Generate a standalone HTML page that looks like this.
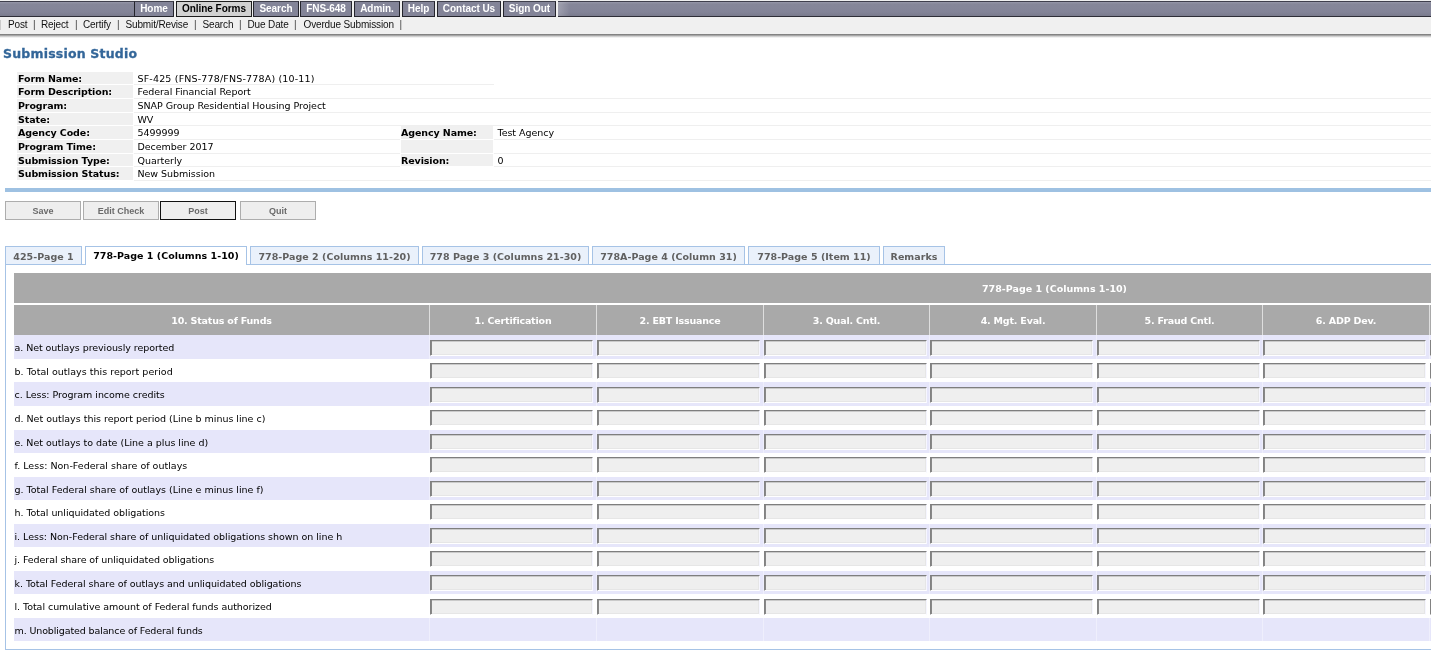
<!DOCTYPE html>
<html lang="en">
<head>
<meta charset="utf-8">
<title>Submission Studio</title>
<style>
html,body{margin:0;padding:0;background:#fff;}
body{width:1431px;height:653px;overflow:hidden;position:relative;font-family:"DejaVu Sans","Liberation Sans",sans-serif;font-size:9.5px;color:#000;letter-spacing:-0.04px;}
*{box-sizing:border-box;}
#wrap{position:absolute;left:0;top:0;width:1431px;height:653px;will-change:transform;}
#topbar{position:absolute;left:0;top:0;width:1431px;height:17px;background:#f0f0f0;}
.nf{position:absolute;top:1px;height:16px;background:linear-gradient(#9798a9 0,#868799 2px,#838498 10px,#7a7b8d 14px);border-top:1px solid #3f3f4c;border-bottom:1px solid #2e2e38;}
.nt{position:absolute;top:1px;height:16px;background:#838498;border:1px solid #24242c;border-top-color:#3f3f4c;color:#fff;font-family:"Liberation Sans",sans-serif;font-weight:bold;font-size:10px;letter-spacing:-0.05px;line-height:14px;text-align:center;white-space:nowrap;}
.nt.act{background:#d2d2d2;color:#000;border-color:#1e1e1e;}
#subbar{position:absolute;left:0;top:17px;width:1431px;height:17px;background:#f0f0f0;font-family:"Liberation Sans",sans-serif;font-size:10px;letter-spacing:-0.14px;line-height:16px;white-space:nowrap;color:#111;}
#subbar span{position:absolute;top:0;}
#subshadow{position:absolute;left:0;top:34px;width:1431px;height:4px;background:linear-gradient(#707070,#a8a8a8 38%,#dedede 70%,#fff);}
h1{position:absolute;left:3px;top:46px;margin:0;font-size:12.5px;line-height:16px;font-weight:bold;color:#336699;white-space:nowrap;letter-spacing:0.2px;-webkit-text-stroke:0.3px #336699;}
.lab{position:absolute;height:13px;background:#f0f0f0;font-weight:bold;font-size:9.5px;letter-spacing:-0.1px;line-height:13px;padding-left:1px;white-space:nowrap;}
.val{position:absolute;height:13px;border-bottom:1px solid #efefef;font-size:9.5px;line-height:13px;padding-left:3.5px;white-space:nowrap;}
#bluebar{position:absolute;left:5px;top:188px;width:1426px;height:4px;background:#9ec1e2;}
.btn{position:absolute;display:block;margin:0;padding:0;border-radius:0;-webkit-appearance:none;appearance:none;top:201px;height:19px;width:76px;background:#eee;border:1px solid #adadad;color:#6a6a6a;font-family:"Liberation Sans",sans-serif;font-weight:bold;font-size:9px;letter-spacing:0;line-height:18px;text-align:center;}
.btn.def{border:1px solid #111;}
.tab{position:absolute;top:246px;height:19px;background:#eaf1fb;border:1px solid #a6c3e6;color:#606060;font-weight:bold;font-size:9.5px;letter-spacing:0.025px;line-height:20px;text-align:center;white-space:nowrap;}
.tab.act{top:246px;height:19px;background:#fff;color:#000;border-bottom:none;line-height:18px;z-index:2;}
#panel{position:absolute;left:5px;top:264px;width:1440px;height:386px;border:1px solid #a6c3e6;border-right:none;background:#fff;}
#grid{position:absolute;left:14px;top:273px;width:1430px;height:370px;}
.gh{position:absolute;background:#a9a9a9;color:#fff;font-weight:bold;font-size:9.5px;letter-spacing:-0.19px;text-align:center;white-space:nowrap;}
.row{position:absolute;left:0;width:1430px;}
.row.alt{background:#e6e6fa;}
.row .t{position:absolute;left:0.5px;top:1px;font-size:9.5px;white-space:nowrap;}
.row .sep{position:absolute;top:0;width:1px;height:100%;background:#efeffc;}
.in{position:absolute;display:block;margin:0;padding:0;outline:none;border-radius:0;-webkit-appearance:none;appearance:none;font:inherit;height:16px;width:163px;background:#efefef;border:1px solid;border-color:#7e7e7e #f6f6ff #fff #828282;box-shadow:inset 1px 0 0 #888,inset 0 1px 0 #cacaca,inset -1px -1px 0 #e6e6e6;}
</style>
</head>
<body>
<div id="wrap">
<div id="topbar">
<div class="nf" style="left:0;width:134px"></div>
<div class="nt" style="left:134px;width:40px">Home</div>
<div class="nt act" style="left:176px;width:76px">Online Forms</div>
<div class="nt" style="left:253px;width:46px">Search</div>
<div class="nt" style="left:300px;width:52px">FNS-648</div>
<div class="nt" style="left:354px;width:46px">Admin.</div>
<div class="nt" style="left:402px;width:33px">Help</div>
<div class="nt" style="left:437px;width:64px">Contact Us</div>
<div class="nt" style="left:503px;width:53px">Sign Out</div>
<div class="nf" style="left:558px;width:873px;background:linear-gradient(90deg,rgba(255,255,255,.22),rgba(255,255,255,0) 12px),linear-gradient(#9798a9 0,#868799 2px,#838498 10px,#7a7b8d 14px)"></div>
</div>
<div id="subbar">
<span style="left:-1.5px;color:#444">|</span>
<span style="left:8px">Post</span>
<span style="left:33px;color:#444">|</span>
<span style="left:41px">Reject</span>
<span style="left:75px;color:#444">|</span>
<span style="left:83px">Certify</span>
<span style="left:117px;color:#444">|</span>
<span style="left:125.5px">Submit/Revise</span>
<span style="left:194px;color:#444">|</span>
<span style="left:202.5px">Search</span>
<span style="left:239px;color:#444">|</span>
<span style="left:247.5px">Due Date</span>
<span style="left:294px;color:#444">|</span>
<span style="left:303.5px">Overdue Submission</span>
<span style="left:399.5px;color:#444">|</span>
</div>
<div id="subshadow"></div>
<h1>Submission Studio</h1>
<div class="lab" style="left:17px;top:72px;width:116px;height:12px">Form Name:</div>
<div class="val" style="left:134px;top:72px;width:360px;height:13px;letter-spacing:0.17px">SF-425 (FNS-778/FNS-778A) (10-11)</div>
<div class="lab" style="left:17px;top:85px;width:116px;height:13px">Form Description:</div>
<div class="val" style="left:134px;top:85px;width:1297px;height:14px">Federal Financial Report</div>
<div class="lab" style="left:17px;top:99px;width:116px;height:13px">Program:</div>
<div class="val" style="left:134px;top:99px;width:1297px;height:14px">SNAP Group Residential Housing Project</div>
<div class="lab" style="left:17px;top:113px;width:116px;height:12px">State:</div>
<div class="val" style="left:134px;top:113px;width:1297px;height:13px">WV</div>
<div class="lab" style="left:17px;top:126px;width:116px;height:13px">Agency Code:</div>
<div class="val" style="left:134px;top:126px;width:266px;height:14px">5499999</div>
<div class="lab" style="left:401px;top:126px;width:92px;padding-left:0;height:13px">Agency Name:</div>
<div class="val" style="left:494px;top:126px;width:937px;height:14px">Test Agency</div>
<div class="lab" style="left:17px;top:140px;width:116px;height:13px">Program Time:</div>
<div class="val" style="left:134px;top:140px;width:266px;height:14px">December 2017</div>
<div class="lab" style="left:401px;top:140px;width:92px;padding-left:0;height:13px"></div>
<div class="val" style="left:494px;top:140px;width:937px;height:14px"></div>
<div class="lab" style="left:17px;top:154px;width:116px;height:12px">Submission Type:</div>
<div class="val" style="left:134px;top:154px;width:266px;height:13px">Quarterly</div>
<div class="lab" style="left:401px;top:154px;width:92px;padding-left:0;height:12px">Revision:</div>
<div class="val" style="left:494px;top:154px;width:937px;height:13px">0</div>
<div class="lab" style="left:17px;top:167px;width:116px;height:13px">Submission Status:</div>
<div class="val" style="left:134px;top:167px;width:1297px;height:14px">New Submission</div>
<div id="bluebar"></div>
<button type="button" class="btn" style="left:5px">Save</button>
<button type="button" class="btn" style="left:83px">Edit Check</button>
<button type="button" class="btn def" style="left:160px">Post</button>
<button type="button" class="btn" style="left:240px">Quit</button>
<div id="panel"></div>
<div class="tab" style="left:5px;width:77px">425-Page 1</div>
<div class="tab act" style="left:85px;width:162px">778-Page 1 (Columns 1-10)</div>
<div class="tab" style="left:250px;width:169px">778-Page 2 (Columns 11-20)</div>
<div class="tab" style="left:422px;width:167px">778 Page 3 (Columns 21-30)</div>
<div class="tab" style="left:592px;width:153px">778A-Page 4 (Column 31)</div>
<div class="tab" style="left:748px;width:132px">778-Page 5 (Item 11)</div>
<div class="tab" style="left:883px;width:62px">Remarks</div>
<div id="grid">
<div class="gh" style="left:0;top:0;width:1430px;height:30px;line-height:30px;text-align:left"><span style="position:absolute;left:968px;top:1px;letter-spacing:0px">778-Page 1 (Columns 1-10)</span></div>
<div style="position:absolute;left:0;top:32px;width:1430px;height:30px;background:#dedede"></div>
<div class="gh" style="left:0px;top:32px;width:415px;height:30px;line-height:32px">10. Status of Funds</div>
<div class="gh" style="left:416px;top:32px;width:166px;height:30px;line-height:32px">1. Certification</div>
<div class="gh" style="left:583px;top:32px;width:166px;height:30px;line-height:32px">2. EBT Issuance</div>
<div class="gh" style="left:750px;top:32px;width:165px;height:30px;line-height:32px">3. Qual. Cntl.</div>
<div class="gh" style="left:916px;top:32px;width:166px;height:30px;line-height:32px">4. Mgt. Eval.</div>
<div class="gh" style="left:1083px;top:32px;width:165px;height:30px;line-height:32px">5. Fraud Cntl.</div>
<div class="gh" style="left:1249px;top:32px;width:166px;height:30px;line-height:32px">6. ADP Dev.</div>
<div class="gh" style="left:1416px;top:32px;width:20px;height:30px;line-height:32px"></div>
<div class="row alt" style="top:62px;height:24px">
<div class="t" style="line-height:24px;letter-spacing:-0.067px">a. Net outlays previously reported</div>
<div class="sep" style="left:415px"></div>
<input class="in" type="text" readonly tabindex="-1" style="left:416px;top:5px">
<div class="sep" style="left:582px"></div>
<input class="in" type="text" readonly tabindex="-1" style="left:583px;top:5px">
<div class="sep" style="left:749px"></div>
<input class="in" type="text" readonly tabindex="-1" style="left:750px;top:5px">
<div class="sep" style="left:915px"></div>
<input class="in" type="text" readonly tabindex="-1" style="left:916px;top:5px">
<div class="sep" style="left:1082px"></div>
<input class="in" type="text" readonly tabindex="-1" style="left:1083px;top:5px">
<div class="sep" style="left:1248px"></div>
<input class="in" type="text" readonly tabindex="-1" style="left:1249px;top:5px">
<div class="sep" style="left:1415px"></div>
<input class="in" type="text" readonly tabindex="-1" style="left:1416px;top:5px">
</div>
<div class="row" style="top:86px;height:23px">
<div class="t" style="line-height:23px;letter-spacing:0.019px">b. Total outlays this report period</div>
<input class="in" type="text" readonly tabindex="-1" style="left:416px;top:4px">
<input class="in" type="text" readonly tabindex="-1" style="left:583px;top:4px">
<input class="in" type="text" readonly tabindex="-1" style="left:750px;top:4px">
<input class="in" type="text" readonly tabindex="-1" style="left:916px;top:4px">
<input class="in" type="text" readonly tabindex="-1" style="left:1083px;top:4px">
<input class="in" type="text" readonly tabindex="-1" style="left:1249px;top:4px">
<input class="in" type="text" readonly tabindex="-1" style="left:1416px;top:4px">
</div>
<div class="row alt" style="top:109px;height:24px">
<div class="t" style="line-height:24px;letter-spacing:-0.039px">c. Less: Program income credits</div>
<div class="sep" style="left:415px"></div>
<input class="in" type="text" readonly tabindex="-1" style="left:416px;top:5px">
<div class="sep" style="left:582px"></div>
<input class="in" type="text" readonly tabindex="-1" style="left:583px;top:5px">
<div class="sep" style="left:749px"></div>
<input class="in" type="text" readonly tabindex="-1" style="left:750px;top:5px">
<div class="sep" style="left:915px"></div>
<input class="in" type="text" readonly tabindex="-1" style="left:916px;top:5px">
<div class="sep" style="left:1082px"></div>
<input class="in" type="text" readonly tabindex="-1" style="left:1083px;top:5px">
<div class="sep" style="left:1248px"></div>
<input class="in" type="text" readonly tabindex="-1" style="left:1249px;top:5px">
<div class="sep" style="left:1415px"></div>
<input class="in" type="text" readonly tabindex="-1" style="left:1416px;top:5px">
</div>
<div class="row" style="top:133px;height:24px">
<div class="t" style="line-height:24px;letter-spacing:-0.014px">d. Net outlays this report period (Line b minus line c)</div>
<input class="in" type="text" readonly tabindex="-1" style="left:416px;top:4px">
<input class="in" type="text" readonly tabindex="-1" style="left:583px;top:4px">
<input class="in" type="text" readonly tabindex="-1" style="left:750px;top:4px">
<input class="in" type="text" readonly tabindex="-1" style="left:916px;top:4px">
<input class="in" type="text" readonly tabindex="-1" style="left:1083px;top:4px">
<input class="in" type="text" readonly tabindex="-1" style="left:1249px;top:4px">
<input class="in" type="text" readonly tabindex="-1" style="left:1416px;top:4px">
</div>
<div class="row alt" style="top:157px;height:23px">
<div class="t" style="line-height:23px;letter-spacing:-0.010px">e. Net outlays to date (Line a plus line d)</div>
<div class="sep" style="left:415px"></div>
<input class="in" type="text" readonly tabindex="-1" style="left:416px;top:4px">
<div class="sep" style="left:582px"></div>
<input class="in" type="text" readonly tabindex="-1" style="left:583px;top:4px">
<div class="sep" style="left:749px"></div>
<input class="in" type="text" readonly tabindex="-1" style="left:750px;top:4px">
<div class="sep" style="left:915px"></div>
<input class="in" type="text" readonly tabindex="-1" style="left:916px;top:4px">
<div class="sep" style="left:1082px"></div>
<input class="in" type="text" readonly tabindex="-1" style="left:1083px;top:4px">
<div class="sep" style="left:1248px"></div>
<input class="in" type="text" readonly tabindex="-1" style="left:1249px;top:4px">
<div class="sep" style="left:1415px"></div>
<input class="in" type="text" readonly tabindex="-1" style="left:1416px;top:4px">
</div>
<div class="row" style="top:180px;height:24px">
<div class="t" style="line-height:24px;letter-spacing:0.013px">f. Less: Non-Federal share of outlays</div>
<input class="in" type="text" readonly tabindex="-1" style="left:416px;top:4px">
<input class="in" type="text" readonly tabindex="-1" style="left:583px;top:4px">
<input class="in" type="text" readonly tabindex="-1" style="left:750px;top:4px">
<input class="in" type="text" readonly tabindex="-1" style="left:916px;top:4px">
<input class="in" type="text" readonly tabindex="-1" style="left:1083px;top:4px">
<input class="in" type="text" readonly tabindex="-1" style="left:1249px;top:4px">
<input class="in" type="text" readonly tabindex="-1" style="left:1416px;top:4px">
</div>
<div class="row alt" style="top:204px;height:23px">
<div class="t" style="line-height:23px;letter-spacing:0.001px">g. Total Federal share of outlays (Line e minus line f)</div>
<div class="sep" style="left:415px"></div>
<input class="in" type="text" readonly tabindex="-1" style="left:416px;top:4px">
<div class="sep" style="left:582px"></div>
<input class="in" type="text" readonly tabindex="-1" style="left:583px;top:4px">
<div class="sep" style="left:749px"></div>
<input class="in" type="text" readonly tabindex="-1" style="left:750px;top:4px">
<div class="sep" style="left:915px"></div>
<input class="in" type="text" readonly tabindex="-1" style="left:916px;top:4px">
<div class="sep" style="left:1082px"></div>
<input class="in" type="text" readonly tabindex="-1" style="left:1083px;top:4px">
<div class="sep" style="left:1248px"></div>
<input class="in" type="text" readonly tabindex="-1" style="left:1249px;top:4px">
<div class="sep" style="left:1415px"></div>
<input class="in" type="text" readonly tabindex="-1" style="left:1416px;top:4px">
</div>
<div class="row" style="top:227px;height:24px">
<div class="t" style="line-height:24px;letter-spacing:-0.043px">h. Total unliquidated obligations</div>
<input class="in" type="text" readonly tabindex="-1" style="left:416px;top:4px">
<input class="in" type="text" readonly tabindex="-1" style="left:583px;top:4px">
<input class="in" type="text" readonly tabindex="-1" style="left:750px;top:4px">
<input class="in" type="text" readonly tabindex="-1" style="left:916px;top:4px">
<input class="in" type="text" readonly tabindex="-1" style="left:1083px;top:4px">
<input class="in" type="text" readonly tabindex="-1" style="left:1249px;top:4px">
<input class="in" type="text" readonly tabindex="-1" style="left:1416px;top:4px">
</div>
<div class="row alt" style="top:251px;height:23px">
<div class="t" style="line-height:23px;letter-spacing:-0.032px">i. Less: Non-Federal share of unliquidated obligations shown on line h</div>
<div class="sep" style="left:415px"></div>
<input class="in" type="text" readonly tabindex="-1" style="left:416px;top:4px">
<div class="sep" style="left:582px"></div>
<input class="in" type="text" readonly tabindex="-1" style="left:583px;top:4px">
<div class="sep" style="left:749px"></div>
<input class="in" type="text" readonly tabindex="-1" style="left:750px;top:4px">
<div class="sep" style="left:915px"></div>
<input class="in" type="text" readonly tabindex="-1" style="left:916px;top:4px">
<div class="sep" style="left:1082px"></div>
<input class="in" type="text" readonly tabindex="-1" style="left:1083px;top:4px">
<div class="sep" style="left:1248px"></div>
<input class="in" type="text" readonly tabindex="-1" style="left:1249px;top:4px">
<div class="sep" style="left:1415px"></div>
<input class="in" type="text" readonly tabindex="-1" style="left:1416px;top:4px">
</div>
<div class="row" style="top:274px;height:24px">
<div class="t" style="line-height:24px;letter-spacing:-0.072px">j. Federal share of unliquidated obligations</div>
<input class="in" type="text" readonly tabindex="-1" style="left:416px;top:4px">
<input class="in" type="text" readonly tabindex="-1" style="left:583px;top:4px">
<input class="in" type="text" readonly tabindex="-1" style="left:750px;top:4px">
<input class="in" type="text" readonly tabindex="-1" style="left:916px;top:4px">
<input class="in" type="text" readonly tabindex="-1" style="left:1083px;top:4px">
<input class="in" type="text" readonly tabindex="-1" style="left:1249px;top:4px">
<input class="in" type="text" readonly tabindex="-1" style="left:1416px;top:4px">
</div>
<div class="row alt" style="top:298px;height:23px">
<div class="t" style="line-height:23px;letter-spacing:-0.042px">k. Total Federal share of outlays and unliquidated obligations</div>
<div class="sep" style="left:415px"></div>
<input class="in" type="text" readonly tabindex="-1" style="left:416px;top:4px">
<div class="sep" style="left:582px"></div>
<input class="in" type="text" readonly tabindex="-1" style="left:583px;top:4px">
<div class="sep" style="left:749px"></div>
<input class="in" type="text" readonly tabindex="-1" style="left:750px;top:4px">
<div class="sep" style="left:915px"></div>
<input class="in" type="text" readonly tabindex="-1" style="left:916px;top:4px">
<div class="sep" style="left:1082px"></div>
<input class="in" type="text" readonly tabindex="-1" style="left:1083px;top:4px">
<div class="sep" style="left:1248px"></div>
<input class="in" type="text" readonly tabindex="-1" style="left:1249px;top:4px">
<div class="sep" style="left:1415px"></div>
<input class="in" type="text" readonly tabindex="-1" style="left:1416px;top:4px">
</div>
<div class="row" style="top:321px;height:24px">
<div class="t" style="line-height:24px;letter-spacing:-0.048px">l. Total cumulative amount of Federal funds authorized</div>
<input class="in" type="text" readonly tabindex="-1" style="left:416px;top:5px">
<input class="in" type="text" readonly tabindex="-1" style="left:583px;top:5px">
<input class="in" type="text" readonly tabindex="-1" style="left:750px;top:5px">
<input class="in" type="text" readonly tabindex="-1" style="left:916px;top:5px">
<input class="in" type="text" readonly tabindex="-1" style="left:1083px;top:5px">
<input class="in" type="text" readonly tabindex="-1" style="left:1249px;top:5px">
<input class="in" type="text" readonly tabindex="-1" style="left:1416px;top:5px">
</div>
<div class="row alt" style="top:345px;height:23px">
<div class="t" style="line-height:23px;letter-spacing:-0.121px">m. Unobligated balance of Federal funds</div>
<div class="sep" style="left:415px"></div>
<div class="sep" style="left:582px"></div>
<div class="sep" style="left:749px"></div>
<div class="sep" style="left:915px"></div>
<div class="sep" style="left:1082px"></div>
<div class="sep" style="left:1248px"></div>
<div class="sep" style="left:1415px"></div>
</div>
</div>
</div>
</body>
</html>
